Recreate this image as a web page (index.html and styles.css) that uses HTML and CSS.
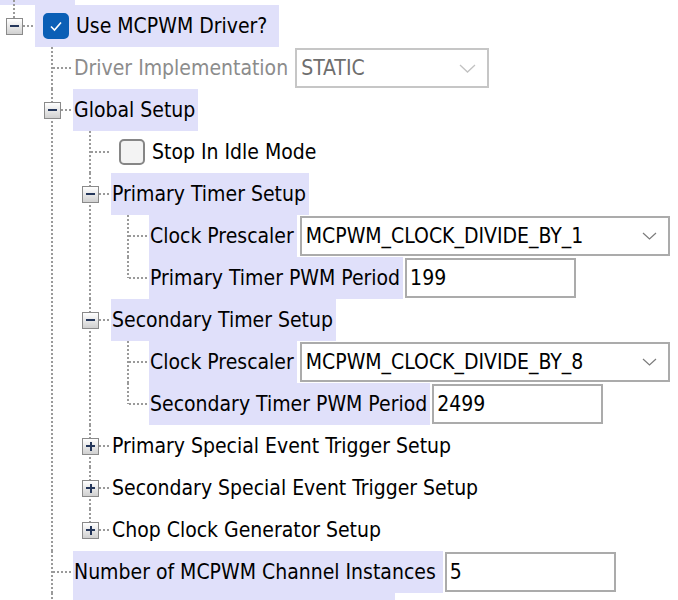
FILE: index.html
```html
<!DOCTYPE html>
<html>
<head>
<meta charset="utf-8">
<title>MCPWM Driver</title>
<link rel="stylesheet" href="styles.css">
</head>
<body>
<div class="tree">
  <div class="stub"></div>
  <ul class="nodes root">
    <li class="node last">
      <div class="row">
        <span class="toggle minus"></span>
        <span class="label sel check"><span class="cb on"><svg width="14" height="12" viewBox="0 0 14 12"><polyline points="2,6.5 5.5,10 12,2.5" fill="none" stroke="#fff" stroke-width="1.6"/></svg></span>Use MCPWM Driver?</span>
      </div>
      <ul class="nodes">
        <li class="node">
          <div class="row">
            <span class="label dim">Driver Implementation</span>
            <span class="combo dis w194"><span>STATIC</span><svg class="chev" width="17" height="9" viewBox="0 0 17 9"><polyline points="1,1 8.5,8 16,1" fill="none" stroke="#c2c2c2" stroke-width="1.3"/></svg></span>
          </div>
        </li>
        <li class="node">
          <div class="row">
            <span class="toggle minus"></span>
            <span class="label sel">Global Setup</span>
          </div>
          <ul class="nodes">
            <li class="node">
              <div class="row">
                <span class="label check"><span class="cb"></span>Stop In Idle Mode</span>
              </div>
            </li>
            <li class="node">
              <div class="row">
                <span class="toggle minus"></span>
                <span class="label sel">Primary Timer Setup</span>
              </div>
              <ul class="nodes">
                <li class="node">
                  <div class="row">
                    <span class="label sel">Clock Prescaler</span>
                    <span class="combo w370"><span>MCPWM_CLOCK_DIVIDE_BY_1</span><svg class="chev" width="15" height="8" viewBox="0 0 15 8"><polyline points="1,1 7.5,7 14,1" fill="none" stroke="#7c7c7c" stroke-width="1.2"/></svg></span>
                  </div>
                </li>
                <li class="node last">
                  <div class="row">
                    <span class="label sel">Primary Timer PWM Period</span>
                    <span class="field">199</span>
                  </div>
                </li>
              </ul>
            </li>
            <li class="node">
              <div class="row">
                <span class="toggle minus"></span>
                <span class="label sel">Secondary Timer Setup</span>
              </div>
              <ul class="nodes">
                <li class="node">
                  <div class="row">
                    <span class="label sel">Clock Prescaler</span>
                    <span class="combo w370"><span>MCPWM_CLOCK_DIVIDE_BY_8</span><svg class="chev" width="15" height="8" viewBox="0 0 15 8"><polyline points="1,1 7.5,7 14,1" fill="none" stroke="#7c7c7c" stroke-width="1.2"/></svg></span>
                  </div>
                </li>
                <li class="node last">
                  <div class="row">
                    <span class="label sel">Secondary Timer PWM Period</span>
                    <span class="field">2499</span>
                  </div>
                </li>
              </ul>
            </li>
            <li class="node">
              <div class="row">
                <span class="toggle plus"></span>
                <span class="label">Primary Special Event Trigger Setup</span>
              </div>
            </li>
            <li class="node">
              <div class="row">
                <span class="toggle plus"></span>
                <span class="label">Secondary Special Event Trigger Setup</span>
              </div>
            </li>
            <li class="node last">
              <div class="row">
                <span class="toggle plus"></span>
                <span class="label">Chop Clock Generator Setup</span>
              </div>
            </li>
          </ul>
        </li>
        <li class="node">
          <div class="row">
            <span class="label sel wide">Number of MCPWM Channel Instances</span>
            <span class="field">5</span>
          </div>
        </li>
        <li class="node">
          <div class="row">
            <span class="label sel w322"></span>
          </div>
        </li>
      </ul>
    </li>
  </ul>
</div>
</body>
</html>
```

FILE: styles.css
```css
* { box-sizing: border-box; }
html, body {
  margin: 0;
  padding: 0;
  background: #ffffff;
}
body {
  font-family: "DejaVu Sans Condensed", "DejaVu Sans", sans-serif;
  font-stretch: condensed;
  font-size: 21px;
  color: #000000;
  overflow: hidden;
  height: 600px;
}
.tree {
  position: relative;
}
.stub {
  width: 75px;
  height: 5px;
  background: #e0e0fa;
}
ul.nodes {
  list-style: none;
  margin: 0;
  padding: 0 0 0 38px;
}
ul.root {
  padding-left: 0;
}
li.node {
  position: relative;
}
li.node::before {
  content: "";
  position: absolute;
  left: 13px;
  top: 0;
  bottom: 0;
  width: 2px;
  background: repeating-linear-gradient(to bottom, #9a9a9a 0 2px, transparent 2px 4px);
}
li.node.last::before {
  bottom: auto;
  height: 21px;
}
.root > li.node::before {
  top: -5px;
}
.root > li.node.last::before {
  height: 26px;
}
li.node::after {
  content: "";
  position: absolute;
  left: 15px;
  top: 20px;
  width: 20px;
  height: 2px;
  background: repeating-linear-gradient(to right, #9a9a9a 0 2px, transparent 2px 4px);
}
.row {
  position: relative;
  display: flex;
  align-items: center;
  height: 42px;
  padding-left: 35px;
}
.toggle {
  position: absolute;
  left: 6px;
  top: 13px;
  width: 17px;
  height: 17px;
  border: 1px solid #8a8a8a;
  background: linear-gradient(#ffffff, #d0d0d0);
  z-index: 1;
}
.toggle::before {
  content: "";
  position: absolute;
  left: 3px;
  top: 6px;
  width: 9px;
  height: 2px;
  background: #24365a;
}
.toggle.plus::after {
  content: "";
  position: absolute;
  left: 6.5px;
  top: 2.5px;
  width: 2px;
  height: 9px;
  background: #24365a;
}
.label {
  display: flex;
  align-items: center;
  height: 42px;
  white-space: nowrap;
  padding: 0 3px 0 1px;
}
.label.sel {
  background: #e0e0fa;
}
.label.dim {
  color: #8c8c8c;
}
.label.check {
  padding-left: 8px;
  padding-right: 12px;
  gap: 7px;
}
.label.wide {
  padding-right: 7px;
}
.label.w322 {
  width: 322px;
}
.cb {
  width: 26px;
  height: 26px;
  border-radius: 5px;
  border: 2px solid #868686;
  background: #f3f3f3;
  display: flex;
  align-items: center;
  justify-content: center;
}
.cb.on {
  background: #0b5fb6;
  border-color: #0b5fb6;
}
.combo {
  display: flex;
  align-items: center;
  justify-content: space-between;
  height: 40px;
  margin-left: 3px;
  padding: 0 11px 0 4px;
  border: 2px solid #ababab;
  background: #ffffff;
  white-space: nowrap;
}
.combo.dis {
  border-color: #c6c6c6;
  color: #6e6e6e;
  margin-left: 4px;
}
.w194 { width: 194px; }
.w370 { width: 370px; }
.field {
  display: flex;
  align-items: center;
  width: 171px;
  height: 40px;
  margin-left: 2px;
  padding-left: 3px;
  border: 2px solid #ababab;
  background: #ffffff;
}
```
